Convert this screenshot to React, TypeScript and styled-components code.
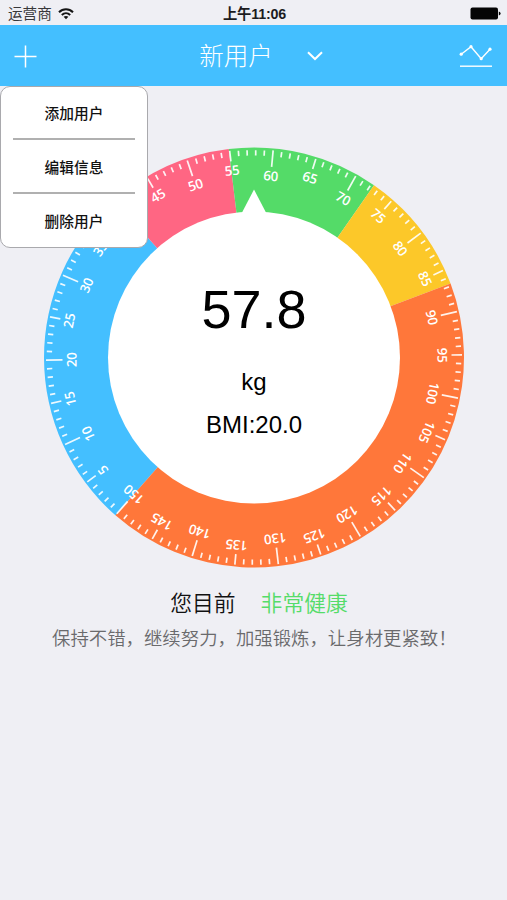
import React from "react";
import styled, { createGlobalStyle } from "styled-components";

const GlobalStyle = createGlobalStyle`
  *, *::before, *::after { box-sizing: border-box; }
  html, body { margin: 0; padding: 0; background: #efeff4; }
  body { font-family: "Liberation Sans", "Noto Sans CJK SC", sans-serif; }
  svg { display: block; overflow: visible; }
`;

const Screen = styled.main`
  position: relative;
  display: flex;
  flex-direction: column;
  width: 507px;
  height: 900px;
  overflow: hidden;
  background: #efeff4;
`;

const StatusBar = styled.header`
  display: grid;
  grid-template-columns: 1fr auto 1fr;
  align-items: center;
  height: 25px;
  padding: 2px 6px 0 8px;
  color: #1c1c1e;
`;

const Carrier = styled.div`
  display: flex;
  align-items: center;
  gap: 6px;
  font-size: 14.6px;
  line-height: 22px;
  color: #38383a;
`;

const Clock = styled.div`
  font-size: 14.3px;
  font-weight: 700;
  line-height: 22px;
  letter-spacing: -0.2px;
`;

const Battery = styled.div`
  justify-self: end;
`;

const NavBar = styled.nav`
  display: grid;
  grid-template-columns: 1fr auto 1fr;
  align-items: center;
  height: 61px;
  padding: 1px 14px 0;
  background: #44bfff;
`;

const IconButton = styled.button<{ $end?: boolean }>`
  justify-self: ${(p) => (p.$end ? "end" : "start")};
  padding: 0;
  border: 0;
  background: none;
  color: #fff;
`;

const UserPicker = styled.button`
  display: flex;
  align-items: center;
  gap: 34px;
  padding: 0 0 0 15px;
  border: 0;
  background: none;
  color: #fff;
  font-family: inherit;
  font-size: 24.5px;
  font-weight: 300;
  line-height: 36px;
`;

const UserName = styled.span`
  padding-top: 2px;
`;

const Menu = styled.ul`
  position: absolute;
  top: 86px;
  left: 0;
  width: 148px;
  height: 162px;
  margin: 0;
  padding: 0 12px;
  list-style: none;
  background: #fff;
  border: 1px solid #a9a9ad;
  border-radius: 10px;
`;

const MenuItem = styled.li`
  display: flex;
  align-items: center;
  justify-content: center;
  height: 54px;
  font-size: 14.7px;
  font-weight: 500;
  color: #111;

  &:first-child {
    height: 51px;
  }

  & + & {
    border-top: 2px solid #b0b0b0;
  }
`;

const Dial = styled.section`
  display: grid;
  justify-content: center;
  margin-top: 62px;
  padding-left: 1px;

  & > * {
    grid-area: 1 / 1;
  }
`;

const Reading = styled.div`
  display: flex;
  flex-direction: column;
  align-items: center;
  padding-top: 130px;
  color: #000;
  z-index: 1;
`;

const Weight = styled.div`
  font-size: 54px;
  line-height: 62px;
`;

const Detail = styled.div<{ $gap: number }>`
  margin-top: ${(p) => p.$gap}px;
  font-size: 24px;
  line-height: 28px;
`;

const Verdict = styled.p`
  display: flex;
  justify-content: center;
  gap: 25px;
  margin: 19px 0 0;
  padding-left: 11px;
  font-size: 21.8px;
  font-weight: 350;
  line-height: 34px;
  color: #111;
`;

const Healthy = styled.span`
  color: #55dc69;
`;

const Advice = styled.p`
  margin: 4px 0 0;
  padding-left: 52px;
  white-space: nowrap;
  font-size: 18.4px;
  font-weight: 350;
  line-height: 28px;
  color: #6a6a6c;
`;

const DialLabel = styled.text`
  font-family: "Open Sans", sans-serif;
  font-size: 13.3px;
  font-weight: 650;
  letter-spacing: -0.25px;
  fill: #fff;
  text-anchor: middle;
`;

const WEIGHT = 57.8;
const MAX = 150;
const C = 210;
const INNER = 146;

const angleOf = (value: number) => ((value - WEIGHT) * 360) / MAX;

const point = (radius: number, deg: number) => {
  const a = (deg * Math.PI) / 180;
  return `${(C + radius * Math.sin(a)).toFixed(2)} ${(C - radius * Math.cos(a)).toFixed(2)}`;
};

const sector = (from: number, to: number) => {
  const large = to - from > 180 ? 1 : 0;
  return `M${point(C, from)} A${C} ${C} 0 ${large} 1 ${point(C, to)} L${point(INNER - 1, to)} A${INNER - 1} ${INNER - 1} 0 ${large} 0 ${point(INNER - 1, from)}Z`;
};

const ZONES = [
  { from: -138.72, to: -41.5, color: "#44bfff" },
  { from: -41.5, to: -6.9, color: "#ff6683" },
  { from: -6.9, to: 34.85, color: "#54db68" },
  { from: 34.85, to: 69.4, color: "#fcc829" },
  { from: 69.4, to: 221.28, color: "#ff773a" },
];

const VALUES = Array.from({ length: MAX }, (_, i) => i + 1);

const tickEnd = (v: number) => (v % 10 === 0 ? 18.5 : v % 5 === 0 ? 12.5 : 8);

const DialFace = () => (
  <svg width="420" height="420" viewBox="0 0.5 420 420">
    {ZONES.map((z) => (
      <path key={z.color} d={sector(z.from, z.to)} fill={z.color} />
    ))}
    <circle cx={C} cy={C} r={INNER} fill="#fff" />
    <path d="M210 42 L222.5 66 H197.5Z" fill="#fff" />
    {VALUES.map((v) => (
      <g key={v} transform={`rotate(${angleOf(v)} ${C} ${C})`}>
        <line
          x1={C}
          x2={C}
          y1={v % 5 === 0 ? 2 : 2.7}
          y2={tickEnd(v)}
          stroke="#fff"
          strokeOpacity={0.9}
          strokeWidth={1.7}
        />
        {v % 5 === 0 && (
          <DialLabel x={C} y={v % 10 === 0 ? 32.5 : 26.5}>
            {v}
          </DialLabel>
        )}
      </g>
    ))}
  </svg>
);

const WifiIcon = () => (
  <svg width="16" height="12" viewBox="0 0 16 12" fill="none" stroke="#151515" strokeWidth="2">
    <path d="M1 4.3 C5 0.3 11 0.3 15 4.3" />
    <path d="M3.8 7 C6.3 4.7 9.7 4.7 12.2 7" />
    <path d="M8 11.2 L5.6 8.8 C7 7.6 9 7.6 10.4 8.8Z" fill="#151515" stroke="none" />
  </svg>
);

const BatteryIcon = () => (
  <svg width="31" height="12" viewBox="0 0.5 31 12">
    <rect x="0.5" y="0" width="27.5" height="12" rx="2" fill="#050505" />
    <path d="M28.8 4 Q30.6 4.6 30.6 6 T28.8 8Z" fill="#050505" />
  </svg>
);

const PlusIcon = () => (
  <svg width="23" height="23" viewBox="0 0 23 23" stroke="currentColor" strokeWidth="1.5">
    <path d="M11.5 0.5V22.5M0.5 11.5H22.5" />
  </svg>
);

const ChevronIcon = () => (
  <svg width="16" height="10" viewBox="0 0 16 10" fill="none" stroke="currentColor" strokeWidth="2">
    <path d="M1 1.2 L8 8 L15 1.2" />
  </svg>
);

const TrendIcon = () => (
  <svg width="34" height="23" viewBox="0 0.5 34 23" fill="none" stroke="currentColor" strokeWidth="1.4">
    <path d="M2.2 9.7 L12 2.2 L22.2 14.2 L31 4.7" />
    <path d="M1 21.7H33" />
    <g fill="currentColor" stroke="none">
      <circle cx="2.2" cy="9.7" r="1.6" />
      <circle cx="12" cy="2.2" r="1.6" />
      <circle cx="22.2" cy="14.2" r="1.6" />
      <circle cx="31" cy="4.7" r="1.6" />
    </g>
  </svg>
);

export default function App() {
  return (
    <>
      <GlobalStyle />
      <Screen>
        <StatusBar>
          <Carrier>
            运营商
            <WifiIcon />
          </Carrier>
          <Clock>上午11:06</Clock>
          <Battery>
            <BatteryIcon />
          </Battery>
        </StatusBar>
        <NavBar>
          <IconButton aria-label="添加">
            <PlusIcon />
          </IconButton>
          <UserPicker>
            <UserName>新用户</UserName>
            <ChevronIcon />
          </UserPicker>
          <IconButton $end aria-label="趋势">
            <TrendIcon />
          </IconButton>
        </NavBar>
        <Dial>
          <DialFace />
          <Reading>
            <Weight>57.8</Weight>
            <Detail $gap={28}>kg</Detail>
            <Detail $gap={15}>BMI:20.0</Detail>
          </Reading>
        </Dial>
        <Verdict>
          <span>您目前</span>
          <Healthy>非常健康</Healthy>
        </Verdict>
        <Advice>保持不错，继续努力，加强锻炼，让身材更紧致！</Advice>
        <Menu>
          <MenuItem>添加用户</MenuItem>
          <MenuItem>编辑信息</MenuItem>
          <MenuItem>删除用户</MenuItem>
        </Menu>
      </Screen>
    </>
  );
}
